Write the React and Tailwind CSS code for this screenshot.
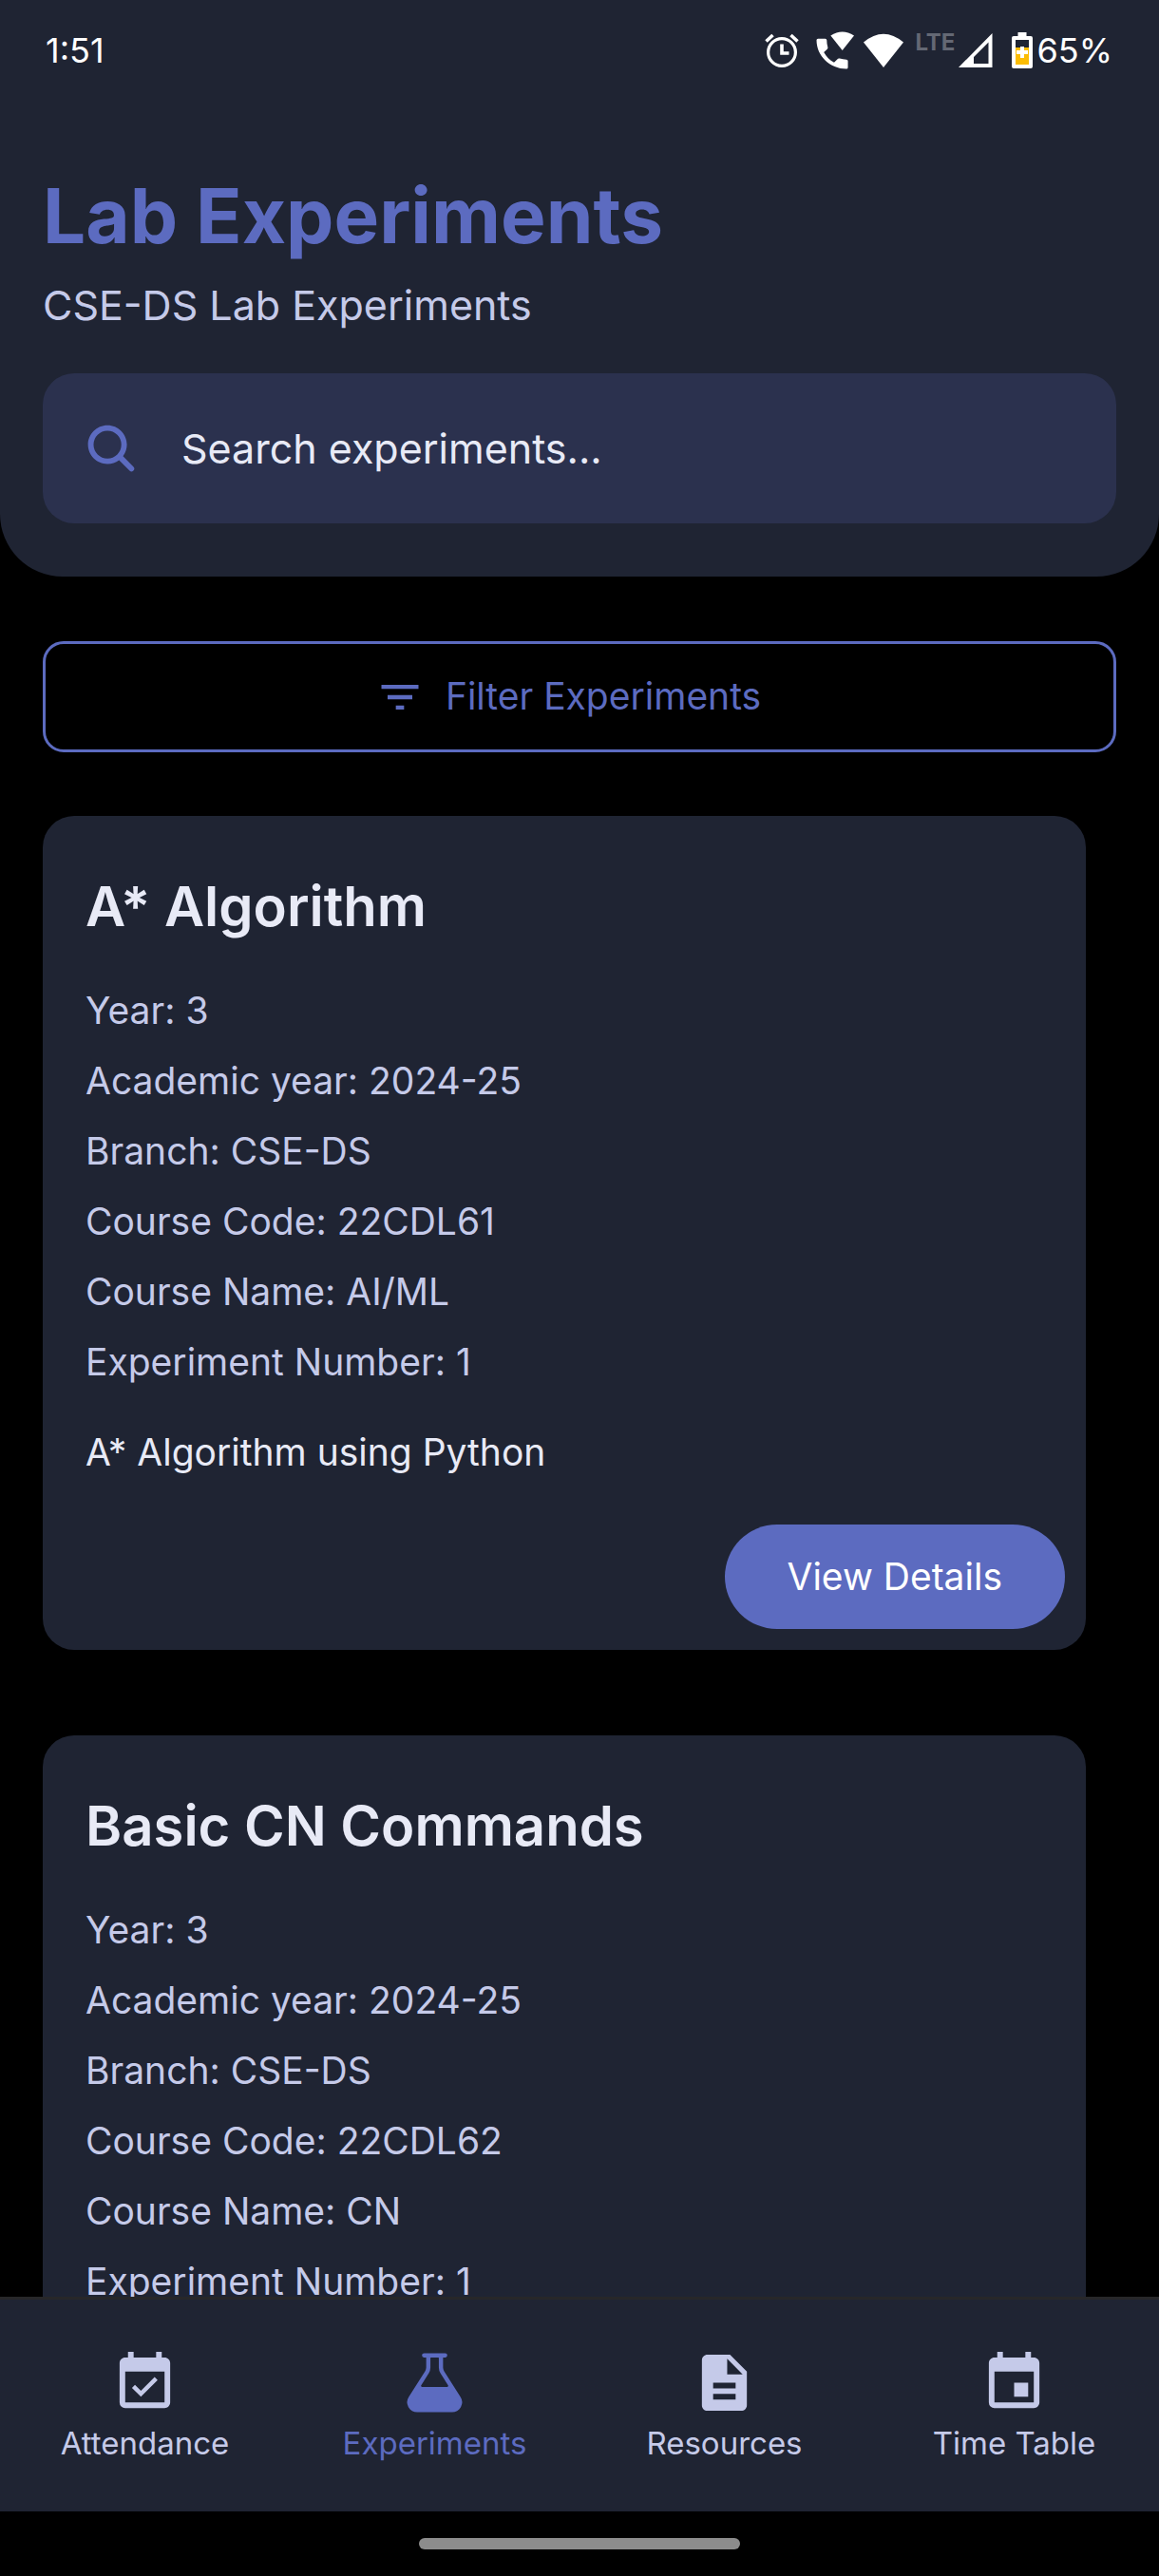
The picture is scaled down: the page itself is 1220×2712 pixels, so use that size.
import { IoFlask, IoSearch } from "react-icons/io5";
import { MdDescription, MdEvent, MdEventAvailable, MdFilterList } from "react-icons/md";

const experiments = [
  {
    title: "A* Algorithm",
    details: [
      ["Year", "3"],
      ["Academic year", "2024-25"],
      ["Branch", "CSE-DS"],
      ["Course Code", "22CDL61"],
      ["Course Name", "AI/ML"],
      ["Experiment Number", "1"],
    ],
    description: "A* Algorithm using Python",
  },
  {
    title: "Basic CN Commands",
    details: [
      ["Year", "3"],
      ["Academic year", "2024-25"],
      ["Branch", "CSE-DS"],
      ["Course Code", "22CDL62"],
      ["Course Name", "CN"],
      ["Experiment Number", "1"],
    ],
    description: "Basic CN Commands",
  },
];

const tabs = [
  { label: "Attendance", Icon: MdEventAvailable },
  { label: "Experiments", Icon: IoFlask, active: true },
  { label: "Resources", Icon: MdDescription },
  { label: "Time Table", Icon: MdEvent },
];

function AlarmIcon() {
  return (
    <svg viewBox="0 0 36 36" className="size-9" fill="none" stroke="currentColor">
      <circle cx="18" cy="20" r="14.4" strokeWidth="3.2" />
      <path d="M18 11.500v9.500h7.500" strokeWidth="3.6" />
      <path d="M1.500 8.500 8.500 2M34.500 8.500 27.500 2" strokeWidth="3.6" />
    </svg>
  );
}

function WifiCallIcon() {
  return (
    <svg viewBox="0 0 39 39" className="size-10" fill="currentColor">
      <path d="M15 4.500Q27 -3.500 39 4.500L27 19.500Z" />
      <path d="M2 7.500h7.500q1.500 0 1.500 1.500 0 4 1 7 .4 1.200-.5 2.200L8 21.500c2.500 4.500 6 8 10.500 10.500l3.500-3.600q.9-.9 2.200-.5 3.200 1 7 1 1.500 0 1.500 1.500V37q0 1.500-1.500 1.500C14 38.500.500 25 .500 9q0-1.500 1.500-1.500Z" />
    </svg>
  );
}

function WifiIcon() {
  return (
    <svg viewBox="0 0 42 36" className="h-9 w-[42px]" fill="currentColor">
      <path d="M0 9.500Q21 -8 42 9.500L21 36Z" />
    </svg>
  );
}

function SignalIcon() {
  return (
    <svg viewBox="0 0 36 36" className="size-9" fill="currentColor">
      <path fillRule="evenodd" d="M35.500 0v36H0ZM31.500 9.500 16 25v7h15.500Z" />
    </svg>
  );
}

function BatteryIcon() {
  return (
    <svg viewBox="0 0 22 38" className="h-[38px] w-[22px]">
      <path d="M6.500 0h9v4H20q2 0 2 2v30q0 2-2 2H2q-2 0-2-2V6q0-2 2-2h4.500Z" fill="#fff" />
      <path d="M4 8h14v8H4Z" fill="#1f2433" />
      <path d="M4 16h14v18H4Z" fill="#fbbc04" />
      <path d="M9 15h4v4h4v4h-4v4H9v-4H5v-4h4Z" fill="#fff" />
    </svg>
  );
}

function StatusBar() {
  return (
    <div className="flex h-[106px] items-center justify-between pr-[49px] pl-12 text-[36px] text-white">
      <span>1:51</span>
      <div className="flex items-center">
        <AlarmIcon />
        <span className="ml-[18px]"><WifiCallIcon /></span>
        <span className="ml-[10px]"><WifiIcon /></span>
        <span className="ml-3 pb-4 text-2xl leading-6 font-bold text-[#646874]">LTE</span>
        <span className="ml-1"><SignalIcon /></span>
        <span className="ml-5"><BatteryIcon /></span>
        <span className="ml-1">65%</span>
      </div>
    </div>
  );
}

function ExperimentCard({ title, details, description }) {
  return (
    <article className="rounded-[33px] bg-[#1f2433] pt-[63px] pb-[22px]">
      <div className="px-[45px]">
        <h2 className="text-[58px] leading-[64px] font-semibold text-[#e8eaf6]">{title}</h2>
        <ul className="mt-[51px] flex flex-col gap-5 text-[39px] leading-[54px] text-[#c5cae9]">
          {details.map(([name, value]) => (
            <li key={name}>{name}: {value}</li>
          ))}
        </ul>
        <p className="mt-[41px] text-[39px] leading-[54px] text-[#e8eaf6]">{description}</p>
      </div>
      <div className="mt-[49px] flex justify-end pr-[22px]">
        <button className="h-[110px] rounded-full bg-[#5c6bc0] px-[66px] text-[39px] text-white">View Details</button>
      </div>
    </article>
  );
}

export default function App() {
  return (
    <div className="flex h-screen flex-col bg-black font-['Inter',sans-serif]">
      <header className="shrink-0 rounded-b-[66px] bg-[#1f2433] pb-14">
        <StatusBar />
        <div className="px-[45px] pt-[75px]">
          <h1 className="text-[80px] leading-[92px] font-bold text-[#5c6bc0]">Lab Experiments</h1>
          <p className="mt-[22px] text-[43px] leading-[52px] text-[#c5cae9]">CSE-DS Lab Experiments</p>
          <label className="mt-[46px] flex h-[158px] items-center gap-[44px] rounded-[33px] bg-[#2b314e] px-[42px]">
            <IoSearch className="size-[60px] shrink-0 text-[#5c6bc0]" />
            <input
              type="text"
              aria-label="Search experiments"
              placeholder="Search experiments..."
              className="min-w-0 flex-1 bg-transparent text-[43px] text-[#e8eaf6] outline-none placeholder:text-[#e8eaf6]"
            />
          </label>
        </div>
      </header>

      <main className="min-h-0 flex-1 overflow-hidden pt-[68px]">
        <div className="px-[45px]">
          <button className="flex h-[117px] w-full items-center justify-center gap-[22px] rounded-[22px] border-3 border-[#5c6bc0] pr-6 text-[39px] text-[#5c6bc0]">
            <MdFilterList className="size-[52px]" />
            Filter Experiments
          </button>
        </div>
        <div className="mt-[67px] flex flex-col gap-[90px] pr-[77px] pl-[45px]">
          {experiments.map((item) => (
            <ExperimentCard key={item.title} {...item} />
          ))}
        </div>
      </main>

      <nav className="grid shrink-0 grid-cols-4 border-t-3 border-[#272729] bg-[#1f2433] pt-[52px] pb-[52px]">
        {tabs.map(({ label, Icon, active }) => (
          <a
            key={label}
            href="#"
            aria-current={active ? "page" : undefined}
            className={
              active
                ? "flex flex-col items-center gap-2 text-[33px] leading-10 text-[#5c6bc0]"
                : "flex flex-col items-center gap-2 text-[33px] leading-10 text-[#c5cae9]"
            }
          >
            <Icon className="size-[71px]" />
            {label}
          </a>
        ))}
      </nav>
      <div className="flex h-[68px] shrink-0 items-center justify-center">
        <div className="h-3 w-[338px] rounded-full bg-[#8c8c8c]" />
      </div>
    </div>
  );
}
